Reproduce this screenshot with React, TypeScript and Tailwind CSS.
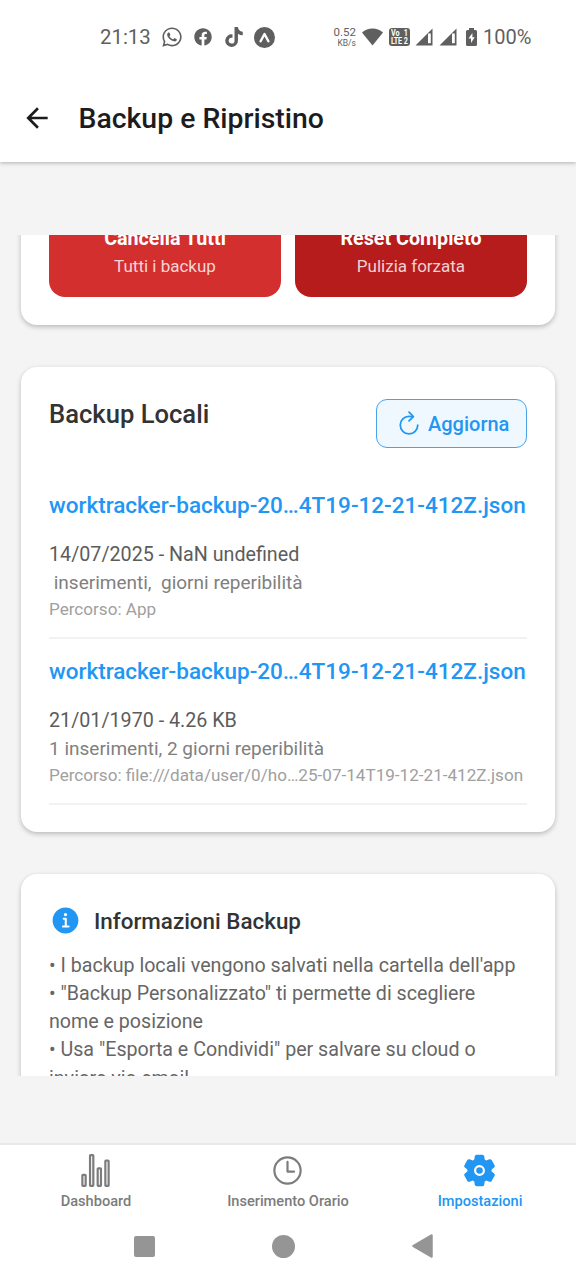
import React from "react";
import { FaFacebook, FaWhatsapp, FaTiktok } from "react-icons/fa";
import { MdArrowBack } from "react-icons/md";
import {
  IoInformationCircle,
  IoRefreshOutline,
  IoSettings,
  IoStatsChartOutline,
  IoTimeOutline,
} from "react-icons/io5";

function SignalIcon() {
  return (
    <svg width="18" height="18" viewBox="0 0 18 18">
      <path d="M17.5 0.5V17.5H0.5Z" fill="#5f5f5f" />
      <rect x="13" y="5.500" width="2.800" height="9.700" fill="#fff" />
    </svg>
  );
}

function StatusBar() {
  return (
    <div className="relative z-10 flex h-[74px] shrink-0 items-center bg-white pl-[100px] text-[#5f5f5f]">
      <span className="w-[61px] text-[20.400px] leading-6 whitespace-nowrap">21:13</span>
      <FaWhatsapp size={22} className="shrink-0" />
      <FaFacebook size={18} className="ml-[11px] shrink-0" />
      <FaTiktok size={20} className="ml-[12px] shrink-0" />
      <svg width="21" height="21" viewBox="0 0 21 21" className="ml-[10px] shrink-0">
        <circle cx="10.5" cy="10.5" r="10.5" fill="#5f5f5f" />
        <path d="M6.6 14.2 10.5 7l3.9 7.2" fill="none" stroke="#fff" strokeWidth="2.4" strokeLinecap="round" strokeLinejoin="round" />
      </svg>
      <div className="ml-[58px] flex w-[23px] shrink-0 flex-col items-end whitespace-nowrap">
        <span className="text-[11.500px] leading-[12px]">0.52</span>
        <span className="text-[8.500px] leading-[10px]">KB/s</span>
      </div>
      <svg width="21" height="18" viewBox="0 0 21 18" className="ml-[6px] shrink-0">
        <path d="M0 4.6C3 1.9 6.6.5 10.5.5S18 1.9 21 4.6L10.500 17.600Z" fill="#5f5f5f" />
      </svg>
      <div className="ml-[6px] h-[18px] w-[21px] shrink-0 rounded-[3px] bg-[#5f5f5f] pl-[2px]">
        <div className="grid h-[18px] w-[22px] origin-left scale-x-[0.8] grid-cols-[16px_6px] content-center text-[9px] leading-[8px] font-bold text-white">
          <span>Vo</span>
          <span>1</span>
          <span className="tracking-[-0.3px]">LTE</span>
          <span>2</span>
        </div>
      </div>
      <div className="ml-[5px] flex shrink-0 gap-[6px]">
        <SignalIcon />
        <SignalIcon />
      </div>
      <svg width="11" height="18" viewBox="0 0 11 18" className="ml-[9px] shrink-0">
        <path d="M3 0h5v2h1.5A1.5 1.5 0 0 1 11 3.500V16.500A1.500 1.500 0 0 1 9.500 18h-8A1.500 1.500 0 0 1 0 16.500V3.500A1.500 1.500 0 0 1 1.500 2H3Z" fill="#5f5f5f" />
        <path d="M6.400 5 2.500 10.500H5V15L8.700 9.300H6.400Z" fill="#fff" />
      </svg>
      <span className="ml-[6px] text-[20px] leading-6">100%</span>
    </div>
  );
}

type BackupProps = { date: string; counts: string; path: string };

function BackupItem({ date, counts, path }: BackupProps) {
  return (
    <div className="border-b-2 border-[#f2f2f2] pt-[18px] pb-[15px] whitespace-pre">
      <div className="text-[22.500px] leading-[28px] font-medium text-[#2196f3]">
        worktracker-backup-20…4T19-12-21-412Z.json
      </div>
      <div className="mt-[22px] text-[19.700px] leading-[28px] text-[#5c5c5c]">{date}</div>
      <div className="text-[19px] leading-[28px] text-[#808080]">{counts}</div>
      <div className="text-[17.100px] leading-[25px] text-[#a0a0a0]">{path}</div>
    </div>
  );
}

const cardStyle = "mx-[21px] shrink-0 rounded-[16px] bg-white px-[28px] shadow-[0_2px_5px_rgba(0,0,0,0.24)]";

export default function App() {
  return (
    <div className="flex h-[1280px] w-[576px] flex-col overflow-hidden bg-[#f4f4f4] font-['Roboto',sans-serif]">
      <StatusBar />
      <header className="flex h-[88px] shrink-0 items-center bg-white pl-[21px] shadow-[0_1px_4px_rgba(0,0,0,0.28)]">
        <MdArrowBack size={32} color="#1c1c1e" />
        <h1 className="ml-[25.500px] pt-px text-[28.400px] leading-8 font-medium text-[#1c1c1e]">Backup e Ripristino</h1>
      </header>

      <main className="mt-[73px] flex h-[841px] shrink-0 flex-col overflow-hidden">
        <section className={`${cardStyle} -mt-[60px] pt-[28px] pb-[28px]`}>
          <div className="grid grid-cols-2 gap-[14px] text-center">
            <div className="h-[94px] rounded-[16px] bg-[#d32f2f] pt-[22px]">
              <div className="text-[19.700px] leading-[28px] font-bold text-white">Cancella Tutti</div>
              <div className="text-[17px] leading-[26px] text-[#f6d5d5]">Tutti i backup</div>
            </div>
            <div className="h-[94px] rounded-[16px] bg-[#b71c1c] pt-[22px]">
              <div className="text-[19.700px] leading-[28px] font-bold text-white">Reset Completo</div>
              <div className="text-[17px] leading-[26px] text-[#f1d2d2]">Pulizia forzata</div>
            </div>
          </div>
        </section>

        <section className={`${cardStyle} mt-[42px] pt-[32px] pb-[27px]`}>
          <div className="flex items-start justify-between">
            <h2 className="text-[25.600px] leading-[30px] font-medium text-[#333]">Backup Locali</h2>
            <button className="flex h-[49px] w-[151px] items-center rounded-[11px] border-[1.500px] border-[#4aa3e8] bg-[#f0f8ff] pl-[18px] text-[#2196f3]">
              <IoRefreshOutline size={28} className="-mt-[2px]" />
              <span className="ml-[5px] text-[20px] font-medium">Aggiorna</span>
            </button>
          </div>
          <div className="mt-[25px]">
            <BackupItem date="14/07/2025 - NaN undefined" counts=" inserimenti,  giorni reperibilità" path="Percorso: App" />
            <BackupItem
              date="21/01/1970 - 4.26 KB"
              counts="1 inserimenti, 2 giorni reperibilità"
              path="Percorso: file:///data/user/0/ho…25-07-14T19-12-21-412Z.json"
            />
          </div>
        </section>

        <section className={`${cardStyle} mt-[42px] h-[300px] pt-[30px]`}>
          <div className="flex h-[32px] items-center">
            <IoInformationCircle size={33} color="#2196f3" />
            <h2 className="ml-[12px] pt-[2px] text-[22.400px] leading-[32px] font-medium text-[#333]">Informazioni Backup</h2>
          </div>
          <div className="mt-[15.500px] text-[19.650px] leading-[28.300px] whitespace-nowrap text-[#666]">
            <p>• I backup locali vengono salvati nella cartella dell'app</p>
            <p>
              • "Backup Personalizzato" ti permette di scegliere
              <br />
              nome e posizione
            </p>
            <p>
              • Usa "Esporta e Condividi" per salvare su cloud o
              <br />
              inviare via email
            </p>
          </div>
        </section>
      </main>

      <footer className="mt-[67px] flex h-[137px] shrink-0 flex-col border-t-2 border-[#e8e8e8] bg-white">
        <nav className="grid grid-cols-3 text-[14.600px] leading-[18px] font-medium text-[#7c7c7c]">
          <div className="flex flex-col items-center pt-[8px]">
            <IoStatsChartOutline size={35} className="mr-[2px]" />
            <span className="mt-[4px]">Dashboard</span>
          </div>
          <div className="flex flex-col items-center pt-[8px]">
            <IoTimeOutline size={35} className="mr-[2px]" />
            <span className="mt-[4px]">Inserimento Orario</span>
          </div>
          <div className="flex flex-col items-center pt-[8px] text-[#2196f3]">
            <IoSettings size={35} className="mr-[2px]" />
            <span className="mt-[4px]">Impostazioni</span>
          </div>
        </nav>
        <div className="mt-[24px] flex h-[24px] items-center">
          <div className="ml-[134px] size-[21px] rounded-[2px] bg-[#959595]" />
          <div className="ml-[117px] size-[23px] rounded-full bg-[#959595]" />
          <svg width="22" height="24" viewBox="0 0 22 24" className="ml-[117px]">
            <path d="M1.500 12 19.500 1.500V22.500Z" fill="#959595" stroke="#959595" strokeWidth="2.500" strokeLinejoin="round" />
          </svg>
        </div>
      </footer>
    </div>
  );
}
